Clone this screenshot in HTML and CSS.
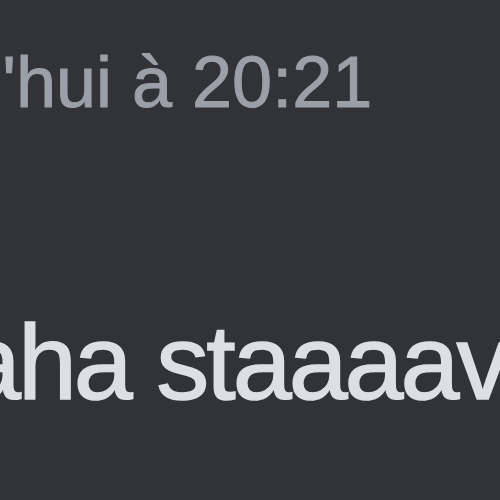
FILE: index.html
```html
<!DOCTYPE html>
<html lang="fr">
<head>
  <meta charset="UTF-8">
  <title>Message</title>
  <link rel="stylesheet" href="styles.css">
</head>
<body>
<div class="message">
  <div class="timestamp">Aujourd'hui à 20:21</div>
  <div class="content">haha staaaav</div>
</div>
</body>
</html>
```

FILE: styles.css
```css
html, body {
  margin: 0;
  height: 100%;
  background: #313338;
  overflow: hidden;
}
.message {
  font-family: "Liberation Sans", Arial, sans-serif;
  white-space: nowrap;
  padding-top: 40px;
}
.timestamp {
  font-size: 72px;
  line-height: 84px;
  color: #9a9fa8;
  margin-left: -246px;
  -webkit-text-stroke: 1px currentColor;
}
.content {
  font-size: 106px;
  line-height: 116px;
  letter-spacing: -3px;
  color: #dcdfe3;
  margin-top: 180px;
  margin-left: -94px;
  -webkit-text-stroke: 1.5px currentColor;
}
```
